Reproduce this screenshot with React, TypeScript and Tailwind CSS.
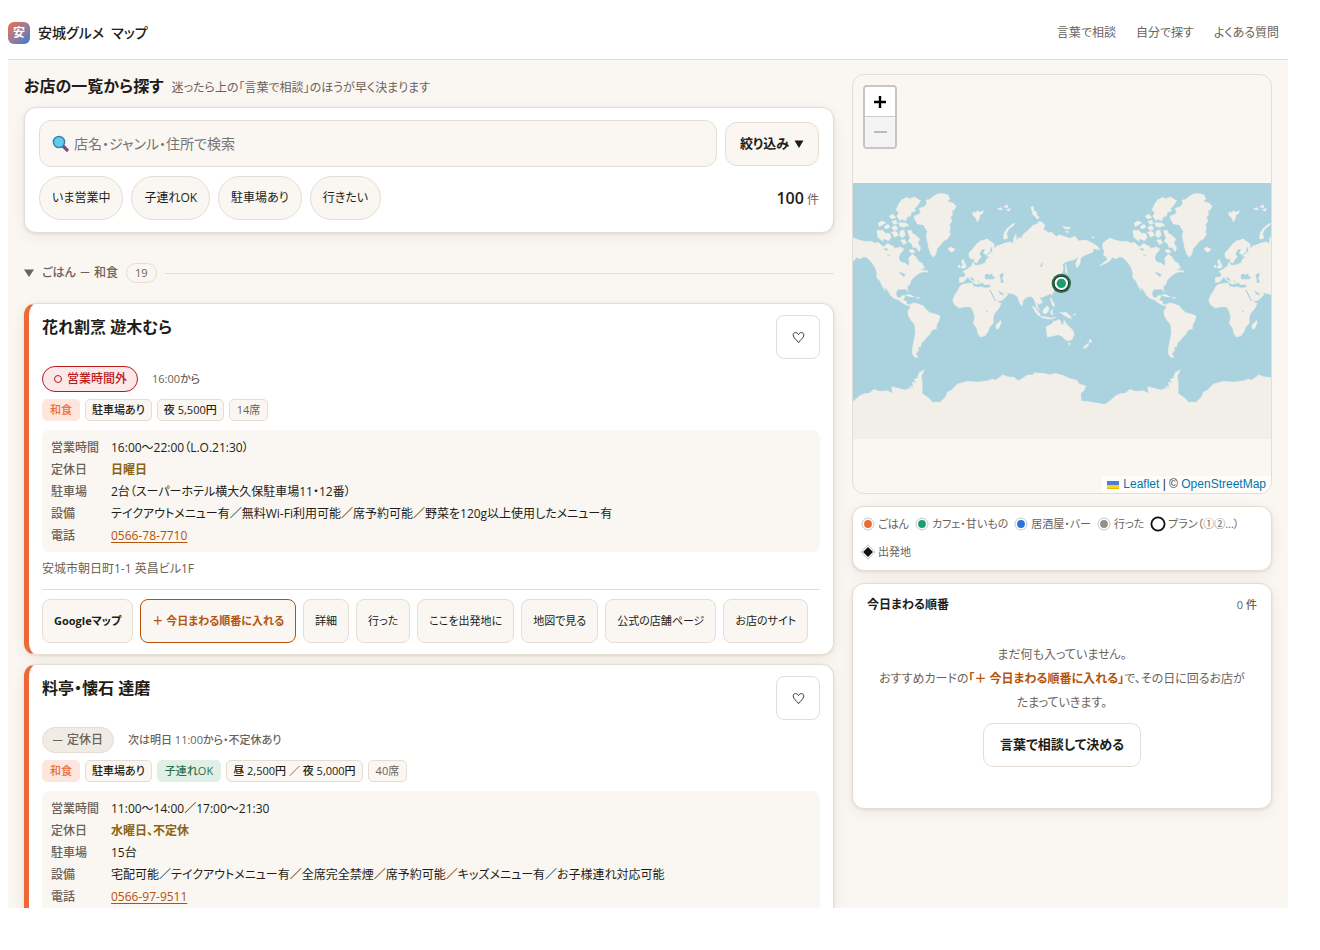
import React from "react";

type Tag = { text: string; kind: "genre" | "plain" | "kids" | "muted" };
type Shop = {
  name: string;
  closed: boolean;
  status: string;
  next: string;
  tags: Tag[];
  hours: string;
  holiday: string;
  parking: string;
  facilities: string;
  tel: string;
  address?: string;
  actions: string[];
};

const shops: Shop[] = [
  {
    name: "花れ割烹 遊木むら",
    closed: false,
    status: "営業時間外",
    next: "16:00から",
    tags: [
      { text: "和食", kind: "genre" },
      { text: "駐車場あり", kind: "plain" },
      { text: "夜 5,500円", kind: "plain" },
      { text: "14席", kind: "muted" },
    ],
    hours: "16:00～22:00（L.O.21:30）",
    holiday: "日曜日",
    parking: "2台（スーパーホテル横大久保駐車場11・12番）",
    facilities: "テイクアウトメニュー有／無料Wi-Fi利用可能／席予約可能／野菜を120g以上使用したメニュー有",
    tel: "0566-78-7710",
    address: "安城市朝日町1-1 英昌ビル1F",
    actions: ["詳細", "行った", "ここを出発地に", "地図で見る", "公式の店舗ページ", "お店のサイト"],
  },
  {
    name: "料亭・懐石 達磨",
    closed: true,
    status: "定休日",
    next: "次は明日 11:00から・不定休あり",
    tags: [
      { text: "和食", kind: "genre" },
      { text: "駐車場あり", kind: "plain" },
      { text: "子連れOK", kind: "kids" },
      { text: "昼 2,500円 ／ 夜 5,000円", kind: "plain" },
      { text: "40席", kind: "muted" },
    ],
    hours: "11:00～14:00／17:00～21:30",
    holiday: "水曜日、不定休",
    parking: "15台",
    facilities: "宅配可能／テイクアウトメニュー有／全席完全禁煙／席予約可能／キッズメニュー有／お子様連れ対応可能",
    tel: "0566-97-9511",
    actions: [],
  },
];

const tagStyles: Record<Tag["kind"], string> = {
  genre: "px-[7px] border-[#fde6dd] bg-[#fde6dd] text-[#ec6a37] font-medium",
  plain: "px-[6px] border-[#e5ddd3] bg-[#faf6f1] text-[#211c17] font-medium",
  kids: "px-[7px] border-[#e1f0e7] bg-[#e1f0e7] text-[#2b6e4f] font-medium",
  muted: "px-[7px] border-[#e5ddd3] bg-[#faf6f1] text-[#6b6259]",
};

const cardShadow = "shadow-[0_1px_3px_rgba(60,40,20,0.10),0_4px_16px_rgba(60,40,20,0.06)]";

const land = [
  "M128,190 140,180 150,174 165,180 182,184 200,184 215,190 222,186 232,196 240,200 250,190 262,196 275,205 290,200 300,208 288,222 284,235 290,245 305,250 312,258 316,248 314,235 325,222 335,230 345,245 355,250 362,265 350,268 370,275 352,277 342,282 330,292 322,300 318,312 310,320 312,335 306,328 295,328 282,328 276,338 278,350 288,354 295,346 303,348 300,356 296,360 308,364 308,372 320,374 318,378 308,376 296,370 284,360 268,354 258,344 250,330 240,320 245,336 234,318 228,304 218,292 218,278 214,264 205,250 190,234 180,230 168,236 158,232 150,242 138,250 118,258 136,244 142,238 138,230 130,225 133,212 128,205Z",
  "M282,75 292,60 308,52 318,56 330,50 350,62 340,78 332,84 334,94 322,97 320,108 310,110 306,122 294,118 288,122 278,108 284,98 276,90Z",
  "M310,152 322,150 325,160 335,165 348,178 342,188 350,205 345,215 336,202 328,204 322,190 312,184 318,174Z",
  "M218,152 236,150 244,160 256,160 262,172 254,182 240,176 236,184 222,172Z",
  "M222,130 234,122 246,128 236,134 226,140Z M240,140 252,132 258,142 246,147Z M256,108 266,102 276,112 264,118Z M264,124 276,120 280,130 270,134Z M262,142 276,136 282,148 270,152Z M284,128 304,128 316,136 298,142 286,138Z M262,156 276,154 284,166 272,172Z M288,152 300,150 304,166 294,174 286,166Z M290,180 302,178 308,190 298,194Z M314,210 326,208 334,216 322,220Z M364,272 372,272 368,278Z",
  "M332,118 330,108 340,105 350,98 345,85 360,80 368,72 366,60 378,58 388,48 400,42 415,40 432,44 438,56 430,64 448,70 457,78 450,90 444,92 446,104 440,110 444,125 436,134 440,142 436,156 440,162 430,178 420,182 412,192 400,205 396,222 388,232 380,222 374,205 370,185 366,165 370,155 358,135 340,132Z",
  "M432,206 440,201 452,206 450,214 440,216Z",
  "M320,372 330,368 345,372 358,378 368,390 378,398 395,402 408,408 405,422 398,435 398,446 384,450 380,460 372,468 362,480 352,490 350,500 342,502 344,512 336,520 342,533 332,532 324,520 326,500 330,480 334,455 332,435 320,420 312,405 312,392 318,384Z",
  "M303,346 315,343 332,350 322,351Z M335,352 348,353 342,356Z",
  "M478,312 490,310 505,309 508,318 520,322 530,320 545,324 556,322 562,332 570,350 578,365 592,370 585,385 572,400 568,412 568,430 558,440 552,455 542,468 528,471 522,462 518,445 508,430 512,412 508,395 500,382 485,380 465,384 452,374 446,362 452,345 462,330 468,318Z",
  "M578,432 586,426 589,420 592,426 586,442 580,449 575,442Z",
  "M496,232 494,220 505,208 515,195 528,183 540,180 550,176 560,184 570,192 572,200 560,200 558,215 545,224 538,220 544,206 534,208 526,222 532,230 524,240 518,250 512,246 510,236 502,238Z",
  "M466,292 482,291 484,280 476,275 492,266 502,258 508,244 512,256 530,254 543,248 548,236 558,230 546,228 558,220 566,212 562,200 578,204 576,198 586,196 600,190 618,185 628,190 629,174 636,162 638,180 646,172 653,175 656,164 673,150 688,135 700,132 704,124 714,126 723,135 718,148 734,158 743,156 758,170 764,164 778,168 798,175 813,168 823,182 846,180 863,188 880,198 888,210 868,206 868,215 853,222 843,225 830,235 828,252 818,265 815,250 823,232 808,240 788,245 776,252 778,265 774,280 768,290 770,304 762,306 758,298 750,304 756,322 748,338 730,345 716,352 706,352 716,366 706,374 698,366 703,385 708,392 698,384 692,362 684,350 672,350 658,360 654,378 648,372 640,350 628,342 608,338 612,344 596,360 576,366 563,345 556,328 560,314 540,314 536,306 530,312 524,302 518,296 526,312 516,312 510,298 502,290 498,296 518,310 512,312 498,298 490,292 484,300 478,306 466,308Z",
  "M470,264 476,254 472,244 478,238 482,250 488,260 482,265Z M460,260 468,254 468,264Z",
  "M598,176 600,160 608,146 625,132 632,130 630,136 614,148 608,162 612,174 604,178Z",
  "M506,96 516,98 520,92 528,96 540,92 534,102 528,104 526,116 520,126 514,112 506,106Z",
  "M580,88 590,82 596,90Z M598,80 610,74 612,84Z M606,90 620,84 616,94Z",
  "M680,82 688,78 690,92 698,96 698,104 706,112 700,118 692,108 686,104 684,92Z",
  "M776,138 786,142 800,141 794,148 782,146Z M784,152 796,156 788,158Z M864,170 872,172 866,175Z",
  "M784,252 788,262 790,282 785,276Z M782,286 794,292 784,298Z M780,300 784,312 768,322 766,318Z",
  "M738,354 744,356 746,366 752,372 750,382 744,374Z M743,338 746,344 742,346Z",
  "M716,392 722,384 730,378 736,386 732,396 724,402 718,400Z M740,392 748,388 744,396 748,404 740,402Z",
  "M684,378 692,382 704,396 710,406 704,408 694,396Z M710,409 726,410 740,414 756,412 740,418 712,413Z",
  "M766,396 774,398 784,396 796,404 804,416 790,412 780,406Z M808,404 816,400 810,408Z",
  "M726,440 743,432 750,422 756,424 762,418 770,422 772,432 778,434 780,420 786,430 796,440 808,452 810,466 803,480 790,482 782,478 776,470 763,464 746,468 730,472Z",
  "M792,488 800,489 796,496Z M858,476 864,484 854,490Z M852,490 854,496 842,506 838,502Z",
  "M96,667 135,673 150,662 170,645 185,640 195,640 210,628 225,634 250,632 265,640 263,620 290,626 302,630 322,624 316,618 328,622 324,606 336,608 330,598 340,595 345,578 362,568 352,588 355,610 354,640 375,655 385,666 408,667 425,650 430,636 440,632 460,612 490,604 520,606 550,602 565,598 575,600 597,584 610,590 630,592 643,602 654,596 668,586 688,584 690,578 720,580 738,584 756,580 776,586 800,596 818,600 826,612 846,618 840,632 830,640 832,663 850,664 864,667 864,780 96,780Z",
];

const water = [
  "M542,286 550,280 556,286 564,280 566,288 574,294 566,298 544,298Z",
  "M586,284 598,278 598,290 594,294 598,302 598,309 590,308 590,296Z",
  "M556,330 559,328 576,362 573,364Z",
  "M582,330 590,336 600,341 598,346 588,342Z",
  "M284,276 294,278 306,284 298,290 292,284Z M240,204 252,206 250,212 242,210Z M246,224 258,224 256,228Z M546,392 552,392 550,398Z",
  "M708,258 716,248 718,250 712,262Z",
];

function WorldTile({ shift }: { shift: number }) {
  return (
    <g transform={`translate(${shift} 0)`}>
      <g fill="#f2efe9" stroke="#f2efe9" strokeWidth="1">
        {land.map((d) => (
          <path key={d} d={d} />
        ))}
      </g>
      <g fill="#aad3df">
        {water.map((d) => (
          <path key={d} d={d} />
        ))}
      </g>
    </g>
  );
}

function MapPanel() {
  return (
    <section
      aria-label="地図"
      className="relative flex h-[420px] flex-col justify-center overflow-hidden rounded-[12px] border border-[#e5ddd3] bg-[#faf6f1]"
    >
      <svg viewBox="-621 9 1254 768" className="mt-[54px] block w-full bg-[#aad3df]" aria-hidden="true">
        <WorldTile shift={-768} />
        <WorldTile shift={0} />
        <circle cx="4" cy="310" r="29" fill="#2b6b49" />
        <circle cx="4" cy="310" r="23" fill="#173a29" />
        <circle cx="4" cy="310" r="20" fill="#fff" />
        <circle cx="4" cy="310" r="14" fill="#1a9e72" />
      </svg>
      <div className="absolute top-[10px] left-[10px] flex w-[34px] flex-col overflow-hidden rounded-[4px] border-2 border-[#c9c5c1]">
        <button aria-label="拡大" className="flex h-[30px] items-center justify-center border-b border-[#ccc] bg-white">
          <svg width="14" height="14" viewBox="0 0 14 14" aria-hidden="true">
            <path d="M7 1v12M1 7h12" stroke="#000" strokeWidth="2.4" />
          </svg>
        </button>
        <button aria-label="縮小" className="flex h-[30px] items-center justify-center bg-[#f4f4f4]">
          <svg width="14" height="14" viewBox="0 0 14 14" aria-hidden="true">
            <path d="M1 7h13" stroke="#bbb" strokeWidth="2" />
          </svg>
        </button>
      </div>
      <div className="absolute right-0 bottom-0 flex items-center bg-white/80 px-[5px] font-['Liberation_Sans',sans-serif] text-[12px] leading-[17px] text-[#333]">
        <a href="#leaflet" className="flex items-center gap-[4px] text-[#0078a8]">
          <svg width="12" height="8" viewBox="0 0 12 8" aria-hidden="true">
            <path fill="#4c7be1" d="M0 0h12v4H0z" />
            <path fill="#ffd500" d="M0 4h12v3H0z" />
            <path fill="#e0bc00" d="M0 7h12v1H0z" />
          </svg>
          Leaflet
        </a>
        <span className="whitespace-pre"> | © </span>
        <a href="#osm" className="text-[#0078a8]">
          OpenStreetMap
        </a>
      </div>
    </section>
  );
}

function Dot({ fill }: { fill: string }) {
  return (
    <svg width="14" height="14" viewBox="0 0 14 14" aria-hidden="true">
      <circle cx="7" cy="7" r="6" fill="#fff" stroke="#c9c9c9" />
      <circle cx="7" cy="7" r="3.9" fill={fill} />
    </svg>
  );
}

function Legend() {
  return (
    <ul
      className={`flex flex-wrap gap-x-[6px] rounded-[12px] border border-[#e5ddd3] bg-white px-[8px] pt-[3px] pb-[4px] text-[11px] leading-[28px] text-[#6b6259] ${cardShadow}`}
    >
      <li className="flex items-center gap-[3px]"><Dot fill="#ec6a37" />ごはん</li>
      <li className="flex items-center gap-[3px]"><Dot fill="#1a9e72" />カフェ・甘いもの</li>
      <li className="flex items-center gap-[3px]"><Dot fill="#2b74d9" />居酒屋・バー</li>
      <li className="flex items-center gap-[3px]"><Dot fill="#969084" />行った</li>
      <li className="flex items-center gap-[2px]">
        <svg width="16" height="16" viewBox="0 0 16 16" aria-hidden="true">
          <circle cx="8" cy="8" r="6.6" fill="#fff" stroke="#111" strokeWidth="1.8" />
        </svg>
        プラン（①②…）
      </li>
      <li className="flex basis-full items-center gap-[3px]">
        <svg width="14" height="16" viewBox="0 0 14 16" aria-hidden="true">
          <path d="M7 .8 14 8l-7 7.2L0 8z" fill="#fff" stroke="#c4c4c4" />
          <path d="M7 3 12 8l-5 5-5-5z" fill="#111" />
        </svg>
        出発地
      </li>
    </ul>
  );
}

function Plan() {
  return (
    <section className={`rounded-[12px] border border-[#e5ddd3] bg-white px-[14px] pt-[11px] pb-[41px] ${cardShadow}`}>
      <div className="flex items-center justify-between">
        <h2 className="text-[12px] leading-[20px] font-bold">今日まわる順番</h2>
        <span className="text-[11px] font-medium text-[#6b6259]">0 件</span>
      </div>
      <div className="mt-[28px] flex flex-col items-center text-center">
        <p className="text-[12px] leading-[24px] text-[#6b6259]">
          まだ何も入っていません。
          <br />
          おすすめカードの<b className="font-bold text-[#b45309]">「＋ 今日まわる順番に入れる」</b>で、その日に回るお店が
          <br />
          たまっていきます。
        </p>
        <button className="mt-[8px] h-[44px] rounded-[10px] border border-[#e5ddd3] bg-white px-[16px] text-[13px] font-bold">
          言葉で相談して決める
        </button>
      </div>
    </section>
  );
}

const actionButton = "h-[44px] rounded-[8px] border px-[11px] text-[11px] whitespace-nowrap";

function ShopCard({ shop }: { shop: Shop }) {
  return (
    <article
      className={`rounded-[12px] border border-l-[5px] border-[#e5ddd3] border-l-[#ec6a37] bg-white px-[13px] py-[11px] ${cardShadow}`}
    >
      <div className="flex items-start justify-between">
        <h2 className="text-[16px] leading-[24px] font-bold">{shop.name}</h2>
        <button
          aria-label="行きたいに追加"
          className="flex h-[44px] w-[44px] items-center justify-center rounded-[8px] border border-[#e5ddd3] bg-white"
        >
          <svg width="13" height="13" viewBox="0 0 14 14" aria-hidden="true">
            <path
              d="M7 12.6C5.8 10.2 1.2 7.4 1.2 4.3 1.2 1.3 5.6.6 7 3.9 8.4.6 12.8 1.3 12.8 4.3 12.8 7.4 8.2 10.2 7 12.6Z"
              fill="none"
              stroke="#211c17"
              strokeWidth="0.9"
            />
          </svg>
        </button>
      </div>
      <div className="mt-[7px] flex items-center gap-[14px]">
        <span
          className={
            shop.closed
              ? "flex h-[26px] items-center gap-[4px] rounded-full border border-[#e5ddd3] bg-[#f0ebe4] px-[10px] text-[12px] font-medium text-[#6b6259]"
              : "flex h-[26px] items-center gap-[4px] rounded-full border border-[#b91c1c] bg-[#fce8e8] px-[10px] text-[12px] font-medium text-[#b91c1c]"
          }
        >
          {shop.closed ? (
            <svg width="10" height="10" viewBox="0 0 10 10" aria-hidden="true">
              <path d="M0 5.5h9.5" stroke="#6b6259" />
            </svg>
          ) : (
            <svg width="10" height="10" viewBox="0 0 10 10" aria-hidden="true">
              <circle cx="5" cy="5" r="3.5" fill="none" stroke="#b91c1c" />
            </svg>
          )}
          {shop.status}
        </span>
        <span className="text-[11px] font-medium text-[#6b6259]">{shop.next}</span>
      </div>
      <ul className="mt-[7px] flex gap-[5px] text-[11px]">
        {shop.tags.map((tag) => (
          <li key={tag.text} className={`flex h-[22px] items-center rounded-[5px] border ${tagStyles[tag.kind]}`}>
            {tag.text}
          </li>
        ))}
      </ul>
      <dl className="mt-[9px] grid grid-cols-[60px_1fr] rounded-[8px] bg-[#faf6f1] px-[9px] pt-[7px] pb-[5px] text-[12px] leading-[22px]">
        <dt className="font-medium text-[#6b6259]">営業時間</dt>
        <dd>{shop.hours}</dd>
        <dt className="font-medium text-[#6b6259]">定休日</dt>
        <dd className="font-bold text-[#8a6514]">{shop.holiday}</dd>
        <dt className="font-medium text-[#6b6259]">駐車場</dt>
        <dd>{shop.parking}</dd>
        <dt className="font-medium text-[#6b6259]">設備</dt>
        <dd>{shop.facilities}</dd>
        <dt className="font-medium text-[#6b6259]">電話</dt>
        <dd>
          <a href={`tel:${shop.tel}`} className="text-[#b45309] underline underline-offset-2">
            {shop.tel}
          </a>
        </dd>
      </dl>
      {shop.address && <p className="mt-[7px] text-[12px] leading-[20px] text-[#6b6259]">{shop.address}</p>}
      {shop.actions.length > 0 && (
        <div className="mt-[10px] flex flex-wrap gap-[7px] border-t border-[#e5ddd3] pt-[9px]">
          <button className={`${actionButton} border-[#e5ddd3] bg-[#faf6f1] font-bold`}>Googleマップ</button>
          <button className={`${actionButton} border-[#b45309] bg-[#faf6f1] font-bold text-[#b45309]`}>
            ＋ 今日まわる順番に入れる
          </button>
          {shop.actions.map((label) => (
            <button key={label} className={`${actionButton} border-[#e5ddd3] bg-[#faf6f1]`}>
              {label}
            </button>
          ))}
        </div>
      )}
    </article>
  );
}

export default function App() {
  return (
    <div className="flex h-screen flex-col bg-white pt-[8px] pr-[32px] pb-[42px] pl-[8px] font-['Open_Sans','Noto_Sans_CJK_JP',sans-serif] text-[#211c17] [font-feature-settings:'palt']">
      <header className="flex h-[52px] shrink-0 items-center justify-between border-b border-[#e5ddd3] pr-[9px] pb-[2px]">
        <a href="#top" className="flex items-center gap-[8px]">
          <span className="flex h-[22px] w-[22px] items-center justify-center rounded-[6px] bg-linear-to-br from-[#ec6a37] to-[#2b74d9] text-[12px] font-bold text-white">
            安
          </span>
          <span className="text-[14px] font-medium whitespace-pre">安城グルメ  マップ</span>
        </a>
        <nav className="flex gap-[20px] text-[12px] text-[#6b6259]">
          <a href="#talk">言葉で相談</a>
          <a href="#browse">自分で探す</a>
          <a href="#faq">よくある質問</a>
        </nav>
      </header>
      <main className="flex min-h-0 flex-1 gap-[18px] overflow-hidden bg-[#faf6f1] px-[16px] pt-[14px]">
        <div className="min-w-0 flex-1">
          <div className="flex h-[24px] items-baseline gap-[8px]">
            <h1 className="text-[16px] leading-[24px] font-bold">お店の一覧から探す</h1>
            <p className="text-[12px] leading-[24px] text-[#6b6259]">迷ったら上の「言葉で相談」のほうが早く決まります</p>
          </div>
          <section className={`mt-[9px] rounded-[12px] border border-[#e5ddd3] bg-white px-[14px] py-[12px] ${cardShadow}`}>
            <div className="flex items-center gap-[8px]">
              <label className="flex h-[47px] flex-1 items-center gap-[5px] rounded-[12px] border border-[#e5ddd3] bg-[#faf6f1] px-[12px]">
                <svg width="17" height="17" viewBox="0 0 17 17" aria-hidden="true">
                  <path d="M10.5 10.5 15 15" stroke="#7b4a86" strokeWidth="3.2" strokeLinecap="round" />
                  <circle cx="7" cy="7" r="5.6" fill="#5fcdee" stroke="#3f7fae" strokeWidth="1.5" />
                </svg>
                <input
                  type="search"
                  aria-label="店名・ジャンル・住所で検索"
                  placeholder="店名・ジャンル・住所で検索"
                  className="min-w-0 flex-1 bg-transparent text-[14px] outline-none placeholder:text-[#757575]"
                />
              </label>
              <button className="flex h-[44px] items-center gap-[5px] rounded-[12px] border border-[#e5ddd3] bg-[#faf6f1] px-[14px] text-[13px] font-bold">
                絞り込み
                <svg width="10" height="8" viewBox="0 0 10 8" aria-hidden="true">
                  <path d="M.5.5h9L5 8z" fill="#211c17" />
                </svg>
              </button>
            </div>
            <div className="mt-[9px] flex items-center gap-[8px]">
              {["いま営業中", "子連れOK", "駐車場あり", "行きたい"].map((label) => (
                <button key={label} className="h-[44px] rounded-full border border-[#e5ddd3] bg-[#faf6f1] px-[12px] text-[12px]">
                  {label}
                </button>
              ))}
              <p className="ml-auto text-[12px] text-[#6b6259]">
                <b className="text-[16px] font-semibold text-[#211c17]">100</b> 件
              </p>
            </div>
          </section>
          <button className="mt-[30px] flex h-[20px] w-full items-center gap-[8px] text-[12px] font-medium text-[#6b6259]">
            <svg width="10" height="8" viewBox="0 0 10 8" aria-hidden="true">
              <path d="M0 .5h10L5 8z" fill="#6b6259" />
            </svg>
            <span>ごはん － 和食</span>
            <span className="flex h-[20px] items-center rounded-full border border-[#e5ddd3] px-[8px] text-[11px]">19</span>
            <span className="h-px flex-1 bg-[#e5ddd3]" />
          </button>
          <div className="mt-[20px] flex flex-col gap-[9px]">
            {shops.map((shop) => (
              <ShopCard key={shop.name} shop={shop} />
            ))}
          </div>
        </div>
        <aside className="flex w-[420px] shrink-0 flex-col gap-[12px]">
          <MapPanel />
          <Legend />
          <Plan />
        </aside>
      </main>
    </div>
  );
}
